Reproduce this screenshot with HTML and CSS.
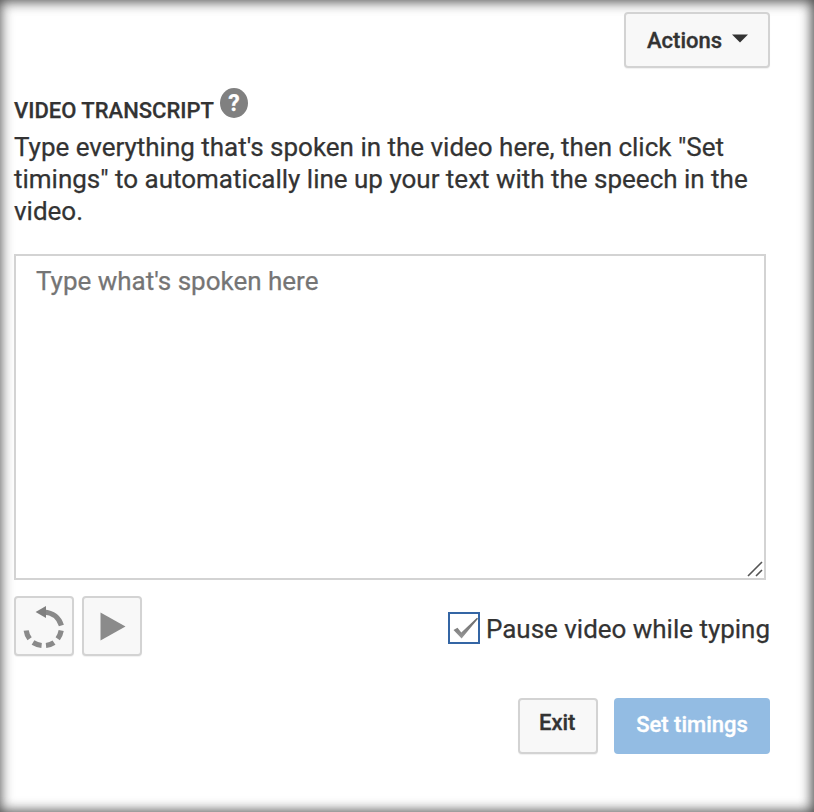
FILE: index.html
```html
<!DOCTYPE html>
<html lang="en">
<head>
<meta charset="utf-8">
<title>Video transcript</title>
<link rel="stylesheet" href="styles.css">
</head>
<body>
<main class="panel">
  <div class="toolbar">
    <button class="btn actions"><span class="actions-label">Actions</span><svg class="caret" width="16" height="9" viewBox="0 0 16 9"><path d="M0 0.5H16L8 8.5Z" fill="#333"/></svg></button>
  </div>
  <div class="heading">
    <h1>VIDEO TRANSCRIPT</h1>
    <span class="help">?</span>
  </div>
  <p class="intro">Type everything that's spoken in the video here, then click "Set<br>timings" to automatically line up your text with the speech in the<br>video.</p>
  <div class="editor">
    <span class="placeholder">Type what's spoken here</span>
    <svg class="grip" width="16" height="16" viewBox="0 0 16 16"><path d="M1 15L15 1M9 15L15 9" stroke="#555" stroke-width="1.6" fill="none"/></svg>
  </div>
  <div class="controls">
    <button class="btn square" aria-label="Rewind">
      <svg width="56" height="56" viewBox="0 0 56 56">
        <g fill="none" stroke="#8a8a8a" stroke-width="5.2">
          <path d="M28 14C37 14.5 43 20 45.4 27.5"/>
          <path d="M45.2 32.5C44.6 36 43.7 38 41.7 40.8"/>
          <path d="M38 44.7C35.5 46.4 33 47.2 30 47.5"/>
          <path d="M25.6 47.5C22.5 47.2 20 46.4 17 44.6"/>
          <path d="M13.6 40.8C11.6 38 10.6 36 10.2 32.5"/>
        </g>
        <path d="M19.6 14L30 8V20Z" fill="#808080"/>
      </svg>
    </button>
    <button class="btn square" aria-label="Play">
      <svg width="56" height="56" viewBox="0 0 56 56"><path d="M16.5 14.5L41.5 28.5L16.5 42.5Z" fill="#8b8b8b"/></svg>
    </button>
    <label class="pause">
      <span class="box"><svg width="28" height="28" viewBox="0 0 28 28"><defs><linearGradient id="tick" x1="0" y1="0" x2="0" y2="1"><stop offset="0" stop-color="#666"/><stop offset="1" stop-color="#999"/></linearGradient></defs><path d="M3.5 16L7.5 13.8L11.3 18.5L27 3.8L28 4.8L11.6 24.5Z" fill="url(#tick)"/></svg></span>
      <span class="pause-label">Pause video while typing</span>
    </label>
  </div>
  <div class="footer">
    <button class="btn exit"><span>Exit</span></button>
    <button class="primary"><span>Set timings</span></button>
  </div>
</main>
</body>
</html>
```
FILE: styles.css
```css
* { box-sizing: border-box; }
body { margin: 0; font-family: Roboto, sans-serif; color: #333; background: #fff; -webkit-text-stroke: 0.25px; }
button { font: 500 22px/28px Roboto, sans-serif; margin: 0; padding: 0; -webkit-text-stroke: 0.35px; }
svg { display: block; flex: none; }
.panel {
  width: 814px;
  height: 812px;
  padding: 12px 44px 0 14px;
  overflow: hidden;
  box-shadow: inset 1px 1px 14px rgba(0,0,0,.35), inset -2px 0 13px rgba(0,0,0,.6);
}
.toolbar { display: flex; justify-content: flex-end; }
.btn {
  display: flex;
  color: #333;
  background: #f8f8f8;
  border: 2px solid #d3d3d3;
  border-radius: 4px;
  box-shadow: 0 1px 1px rgba(0,0,0,.06);
}
.actions { width: 146px; height: 56px; padding: 13px 0 0 21px; }
.actions-label { width: 85px; text-align: left; }
.caret { margin-top: 7px; }
.heading { display: flex; height: 63px; padding-top: 20px; gap: 6px; }
h1 { margin: 9px 0 0; width: 200px; white-space: nowrap; font: 500 22px/28px Roboto, sans-serif; }
.help {
  width: 28px;
  height: 30px;
  padding-top: 1px;
  border-radius: 50%;
  background: #808080;
  color: #fff;
  font: 700 23px/30px Roboto, sans-serif;
  text-align: center;
}
.intro { margin: 0; white-space: nowrap; font-size: 26px; line-height: 32px; letter-spacing: -0.01px; }
.editor {
  position: relative;
  width: 752px;
  height: 326px;
  margin-top: 27px;
  padding: 9px 20px;
  border: 2px solid #d3d3d3;
}
.placeholder { font-size: 26px; line-height: 32px; color: #757575; }
.grip { position: absolute; right: 1px; bottom: 1px; }
.controls { display: flex; gap: 8px; margin-top: 16px; }
.square { width: 60px; height: 60px; }
.pause { display: flex; margin-left: auto; padding-top: 16px; gap: 6px; }
.box { width: 32px; height: 32px; border: 2px solid #3465a4; background: #fff; }
.pause-label { width: 284px; white-space: nowrap; font-size: 26px; line-height: 34px; letter-spacing: -0.02px; }
.footer { display: flex; justify-content: flex-end; gap: 16px; margin-top: 42px; }
.exit { width: 80px; height: 56px; padding: 9px 0 0 19px; }
.primary {
  width: 156px;
  height: 56px;
  padding-bottom: 3px;
  border: 0;
  border-radius: 4px;
  color: #fff;
  background: #93bce3;
}
```
